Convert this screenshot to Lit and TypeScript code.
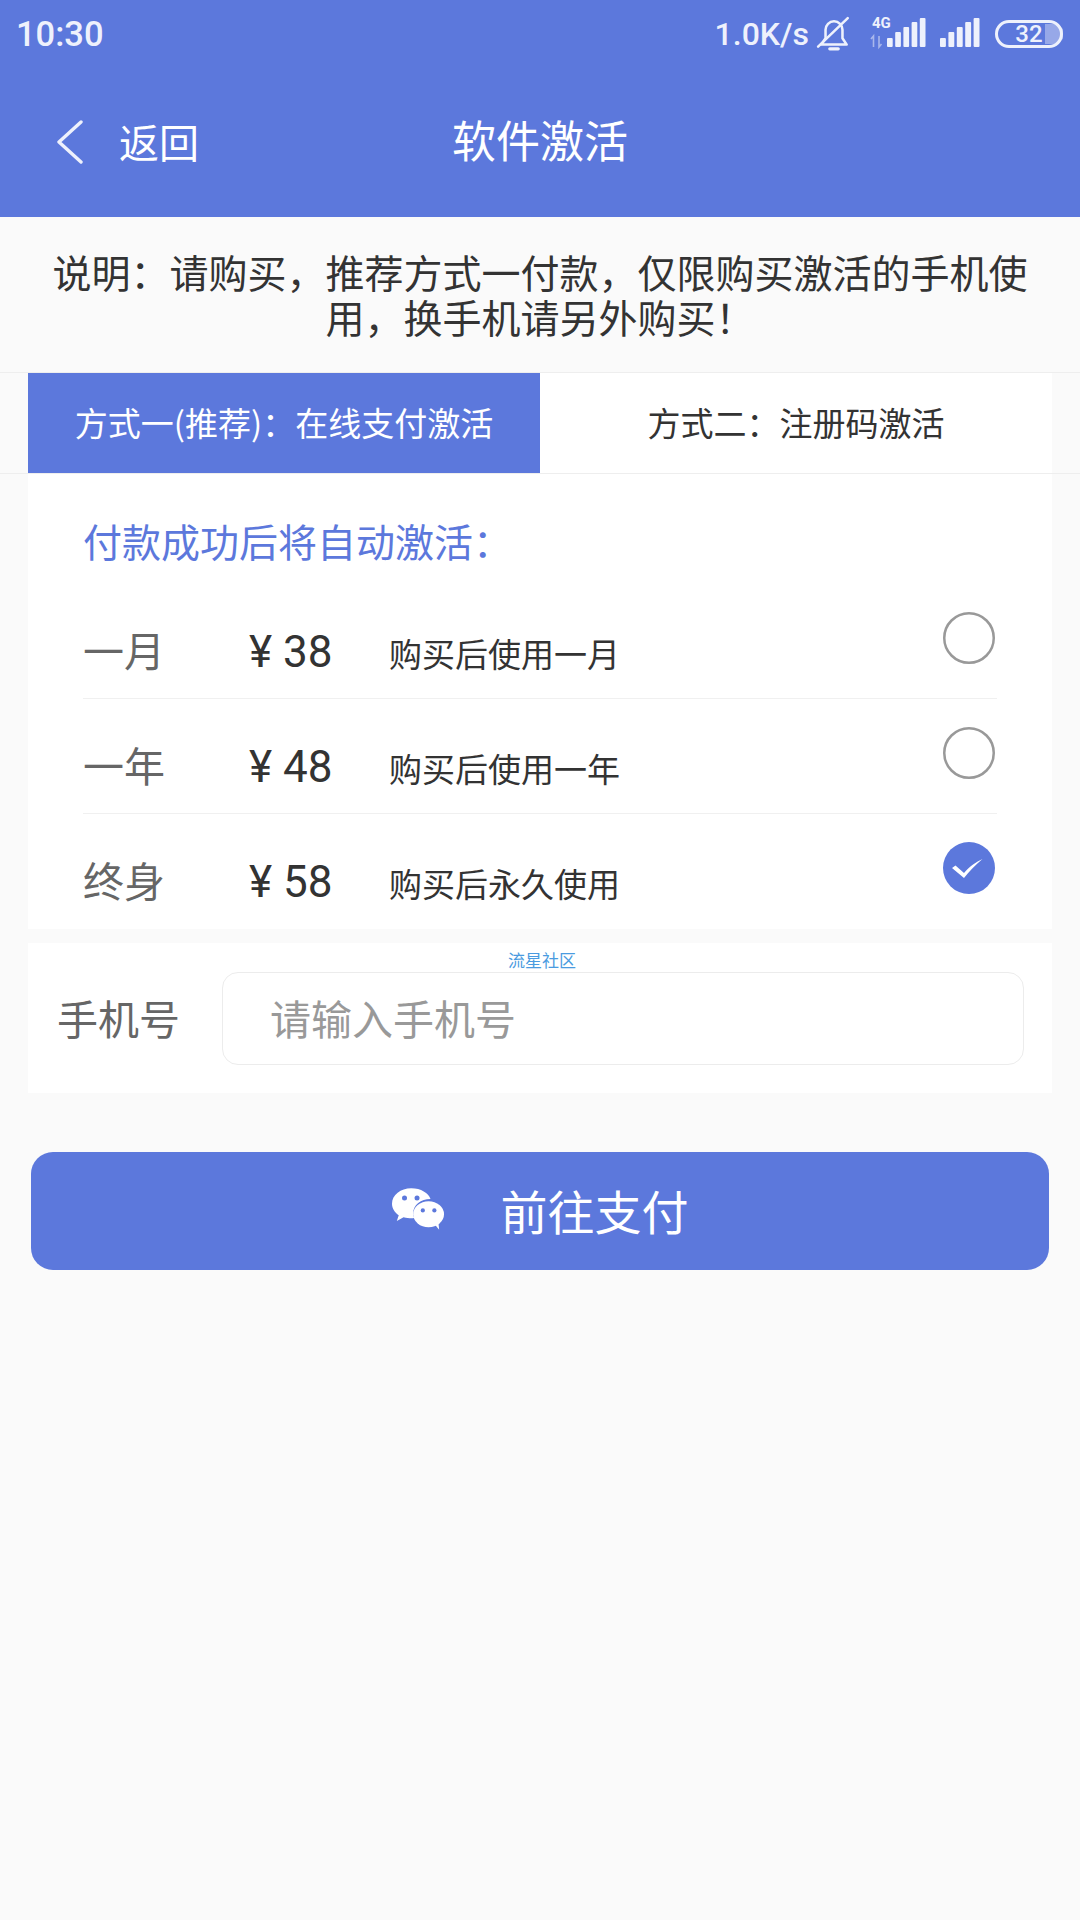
import { LitElement, html, css, svg } from "lit";
import { customElement } from "lit/decorators.js";

const plans = [
  { name: "一月", price: "¥ 38", desc: "购买后使用一月", on: false },
  { name: "一年", price: "¥ 48", desc: "购买后使用一年", on: false },
  { name: "终身", price: "¥ 58", desc: "购买后永久使用", on: true },
];

@customElement("app-root")
export class AppRoot extends LitElement {
  static styles = css`
    :host {
      display: block;
      width: 1080px;
      height: 1920px;
      background: #fafafa;
      font-family: "Noto Sans CJK SC", "Noto Sans", sans-serif;
      color: #333;
      overflow: hidden;
    }
    .header {
      height: 217px;
      background: #5c78dc;
      color: #fff;
      display: flex;
      flex-direction: column;
    }
    .status {
      height: 68px;
      display: flex;
      align-items: center;
      padding: 0 17px 0 16px;
      color: #eef1fc;
      font-family: Roboto, sans-serif;
      font-weight: 500;
    }
    .time { font-size: 34.5px; flex: 1; }
    .speed { font-size: 32px; margin-right: 7px; }
    .bell { margin-right: 18px; }
    .sig2 { margin-left: 12px; margin-right: 13px; }
    .nav {
      flex: 1;
      position: relative;
      display: flex;
      align-items: center;
      justify-content: center;
      padding-bottom: 7px;
    }
    .title { font-size: 44px; line-height: 60px; }
    .back {
      position: absolute;
      left: 56px;
      top: 43px;
      display: flex;
      align-items: center;
      gap: 35px;
      font-size: 40px;
      line-height: 60px;
    }
    .back span { padding-bottom: 2px; }
    .notice {
      height: 155px;
      box-sizing: border-box;
      padding: 32px 50px 0;
      text-align: center;
      font-size: 39px;
      line-height: 45px;
      color: #333;
    }
    .tabs-band {
      border-top: 1px solid #eeeeee;
      border-bottom: 1px solid #eeeeee;
      padding: 0 28px;
    }
    .tabs { display: flex; height: 100px; background: #fff; }
    .tab {
      flex: 1;
      display: flex;
      align-items: center;
      justify-content: center;
      font-size: 33px;
      color: #333;
      padding-bottom: 2px;
      box-sizing: border-box;
    }
    .tab.active { background: #5c78dc; color: #fff; }
    .plans {
      margin: 0 28px;
      height: 455px;
      background: #fff;
      padding: 0 55px;
      overflow: hidden;
    }
    .lead {
      font-size: 39px;
      line-height: 56px;
      padding-top: 38px;
      color: #5c78dc;
      height: 72px;
    }
    .row {
      height: 115px;
      box-sizing: border-box;
      display: flex;
      align-items: center;
      border-bottom: 1px solid #f0f0f0;
      padding-top: 19px;
    }
    .row:last-child { border-bottom: none; }
    .name { width: 166px; font-size: 41px; color: #666; padding-bottom: 4px; }
    .price {
      width: 140px;
      font-family: Roboto, sans-serif;
      font-size: 44px;
      color: #333;
      padding-top: 2px;
    }
    .desc { flex: 1; font-size: 33px; color: #333; padding-top: 4px; }
    .radio { margin: -26px 2px 0 0; display: block; }
    .phone {
      position: relative;
      margin: 14px 28px 0;
      height: 150px;
      background: #fff;
      display: flex;
      align-items: center;
      padding: 0 28px 0 29px;
      box-sizing: border-box;
    }
    .phone-label { width: 165px; font-size: 41px; color: #666; padding-bottom: 2px; }
    .input {
      flex: 1;
      height: 93px;
      box-sizing: border-box;
      border: 1px solid #ececec;
      border-radius: 16px;
      display: flex;
      align-items: center;
      padding: 0 0 2px 47px;
      font-size: 41px;
      color: #999;
    }
    .mark {
      position: absolute;
      left: 480px;
      top: 5px;
      font-size: 17px;
      line-height: 24px;
      color: #4a9be0;
    }
    .pay {
      margin: 59px 31px 0;
      height: 118px;
      box-sizing: border-box;
      padding-bottom: 3px;
      background: #5c78dc;
      border-radius: 22px;
      color: #fff;
      display: flex;
      align-items: center;
      justify-content: center;
      gap: 57px;
      font-size: 47px;
    }
  `;

  bars(w: number) {
    const heights = [9, 15, 20, 25, 29];
    return heights.map(
      (h, i) => svg`<rect x=${i * (w / 5)} y=${29 - h} width=${w / 5 - 2.5} height=${h} rx="1" fill="#eef1fc"></rect>`
    );
  }

  render() {
    return html`
      <div class="header">
        <div class="status">
          <span class="time">10:30</span>
          <span class="speed">1.0K/s</span>
          <svg class="bell" width="36" height="36" viewBox="0 0 34 34" fill="none" stroke="#eef1fc" stroke-width="2.4">
            <path d="M5 27h24l-4-6v-8a8 8 0 0 0-16 0v8z" stroke-linejoin="round"></path>
            <path d="M13 31h8" stroke-width="3" stroke-linecap="round"></path>
            <path d="M2 29L30 2" stroke-linecap="round"></path>
          </svg>
          <svg width="58" height="44" viewBox="0 0 58 44">
            <text x="2" y="16" font-size="15" font-weight="700" font-family="Roboto, sans-serif" fill="#eef1fc">4G</text>
            <path d="M3.5 35V24l-2.5 3M9 24v11l2.5-3" stroke="#a9b7ec" stroke-width="1.6" fill="none"></path>
            <g transform="translate(17,6)">${this.bars(41)}</g>
          </svg>
          <svg class="sig2" width="42" height="32" viewBox="0 0 42 32">
            ${this.bars(42)}
          </svg>
          <svg width="68" height="30" viewBox="0 0 68 30">
            <path d="M50 5h9a10 10 0 0 1 0 20h-9z" fill="#97a8e8"></path>
            <rect x="1.5" y="2.5" width="65" height="25" rx="12.5" fill="none" stroke="#eef1fc" stroke-width="3"></rect>
            <text x="34" y="23" text-anchor="middle" font-size="24" font-weight="500" font-family="Roboto, sans-serif" fill="#eef1fc">32</text>
          </svg>
        </div>
        <div class="nav">
          <div class="back">
            <svg width="28" height="44" viewBox="0 0 28 44" fill="none" stroke="#eef1fc" stroke-width="3.4" stroke-linecap="round" stroke-linejoin="round">
              <path d="M25 2L3 22l22 20"></path>
            </svg>
            <span>返回</span>
          </div>
          <span class="title">软件激活</span>
        </div>
      </div>
      <div class="notice">说明：请购买，推荐方式一付款，仅限购买激活的手机使用，换手机请另外购买！</div>
      <div class="tabs-band">
        <div class="tabs">
          <div class="tab active">方式一(推荐)：在线支付激活</div>
          <div class="tab">方式二：注册码激活</div>
        </div>
      </div>
      <div class="plans">
        <div class="lead">付款成功后将自动激活：</div>
        ${plans.map(
          (p) => html`
            <div class="row">
              <span class="name">${p.name}</span>
              <span class="price">${p.price}</span>
              <span class="desc">${p.desc}</span>
              ${p.on
                ? html`<svg class="radio" width="52" height="52" viewBox="0 0 52 52">
                    <circle cx="26" cy="26" r="26" fill="#5c78dc"></circle>
                    <path d="M9 26l3.5-2.5L21 31C27 24 33 20 39.5 17 32 23 26 30 21 36z" fill="#fff"></path>
                  </svg>`
                : html`<svg class="radio" width="52" height="52" viewBox="0 0 52 52">
                    <circle cx="26" cy="26" r="24.75" fill="#fff" stroke="#999" stroke-width="2.5"></circle>
                  </svg>`}
            </div>
          `
        )}
      </div>
      <div class="phone">
        <span class="mark">流星社区</span>
        <span class="phone-label">手机号</span>
        <div class="input">请输入手机号</div>
      </div>
      <div class="pay">
        <svg width="52" height="43" viewBox="0 0 54 44">
          <path d="M20 0C9 0 0 7 0 16c0 5 3 9 7 12l-2 6 7-4c3 1 6 1 8 1 1 0 2 0 3-.2C22 29 22 27 22 26c0-9 8-15 18-15C38 5 30 0 20 0z" fill="#fff"></path>
          <ellipse cx="38" cy="27" rx="16" ry="13.5" fill="#fff"></ellipse>
          <path d="M44 37l5 6-1-9z" fill="#fff"></path>
          <circle cx="13" cy="10" r="2.6" fill="#5c78dc"></circle>
          <circle cx="26" cy="10" r="2.6" fill="#5c78dc"></circle>
          <circle cx="32" cy="23" r="2.2" fill="#5c78dc"></circle>
          <circle cx="44" cy="23" r="2.2" fill="#5c78dc"></circle>
        </svg>
        <span>前往支付</span>
      </div>
    `;
  }
}
